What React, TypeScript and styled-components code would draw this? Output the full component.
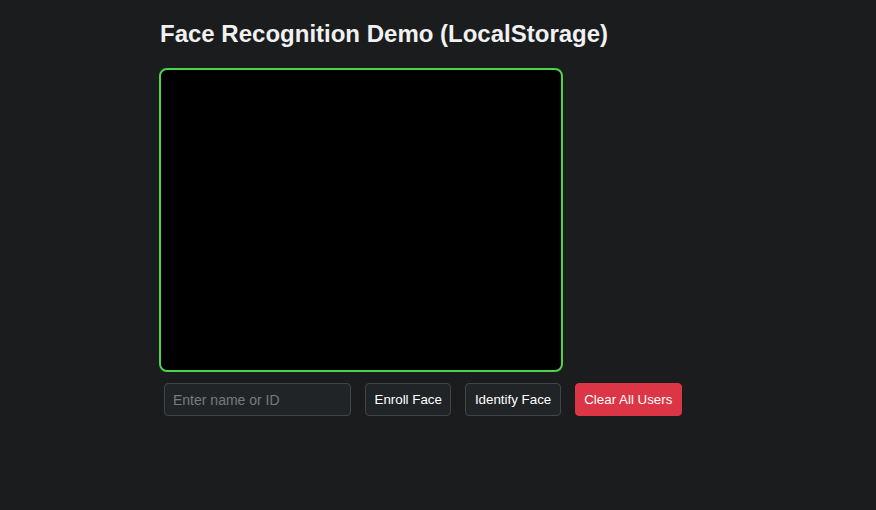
import React from 'react';
import styled, { createGlobalStyle } from 'styled-components';

const GlobalStyle = createGlobalStyle`
  html, body {
    margin: 0;
    padding: 0;
    background: #1b1c1e;
    color: #f1f1f1;
    font-family: "Liberation Sans", Arial, sans-serif;
  }
`;

const Page = styled.div`
  width: 558px;
  margin: 0 auto;
  padding-top: 20px;
`;

const Title = styled.h1`
  font-size: 24px;
  font-weight: 700;
  margin: 0 0 20px 1px;
  line-height: 28px;
  color: #f1f1f1;
`;

const VideoBox = styled.div`
  width: 400px;
  height: 300px;
  background: #000;
  border: 2px solid #4cd54c;
  border-radius: 8px;
`;

const Controls = styled.div`
  display: flex;
  align-items: center;
  gap: 14px;
  margin-top: 11px;
  padding-left: 5px;
`;

const NameInput = styled.input`
  box-sizing: border-box;
  width: 187px;
  height: 33px;
  padding: 0 8px;
  background: #212427;
  border: 1px solid #444;
  border-radius: 4px;
  color: #f1f1f1;
  font-family: "Liberation Sans", Arial, sans-serif;
  font-size: 14px;
  outline: none;

  &::placeholder {
    color: #777b80;
  }
`;

const Button = styled.button<{ $danger?: boolean }>`
  box-sizing: border-box;
  height: 33px;
  padding: 0 8.5px;
  background: ${({ $danger }) => ($danger ? '#dc3545' : '#212427')};
  border: 1px solid ${({ $danger }) => ($danger ? '#dc3545' : '#444')};
  border-radius: 4px;
  color: #ffffff;
  font-family: "Liberation Sans", Arial, sans-serif;
  font-size: 13.333px;
  cursor: pointer;
`;

const App: React.FC = () => (
  <>
    <GlobalStyle />
    <Page>
      <Title>Face Recognition Demo (LocalStorage)</Title>
      <VideoBox />
      <Controls>
        <NameInput placeholder="Enter name or ID" />
        <Button>Enroll Face</Button>
        <Button>Identify Face</Button>
        <Button $danger>Clear All Users</Button>
      </Controls>
    </Page>
  </>
);

export default App;
